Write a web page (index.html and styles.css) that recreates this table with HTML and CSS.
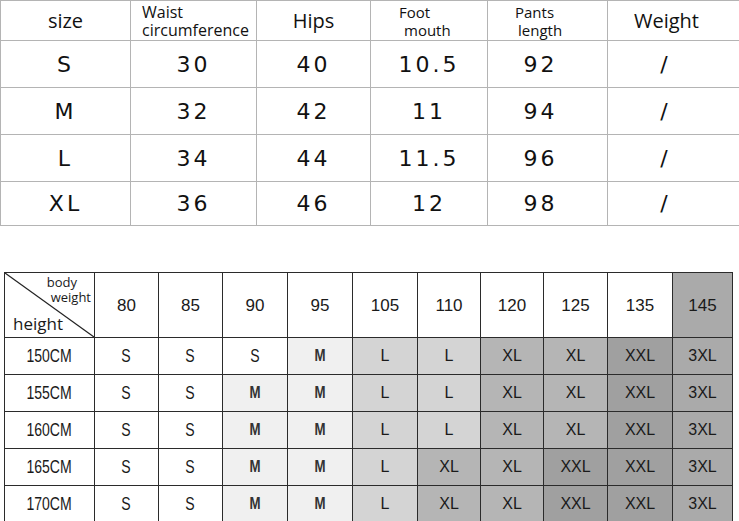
FILE: index.html
```
<!DOCTYPE html>
<html>
<head>
<meta charset="utf-8">
<link rel="stylesheet" href="styles.css">
</head>
<body>
<table class="size-table">
  <colgroup>
    <col style="width:130px"><col style="width:126px"><col style="width:114px"><col style="width:117px"><col style="width:120px"><col style="width:132px">
  </colgroup>
  <tr class="head">
    <th class="big">size</th>
    <th class="two waist"><span>Waist</span><span>circumference</span></th>
    <th class="big">Hips</th>
    <th class="two foot"><span>Foot</span><span class="ind">mouth</span></th>
    <th class="two pants"><span>Pants</span><span class="ind">length</span></th>
    <th class="big wt">Weight</th>
  </tr>
  <tr><td>S</td><td>30</td><td>40</td><td>10.5</td><td class="pl">92</td><td class="sl">/</td></tr>
  <tr><td>M</td><td>32</td><td>42</td><td>11</td><td class="pl">94</td><td class="sl">/</td></tr>
  <tr><td>L</td><td>34</td><td>44</td><td>11.5</td><td class="pl">96</td><td class="sl">/</td></tr>
  <tr class="last"><td>XL</td><td>36</td><td>46</td><td>12</td><td class="pl">98</td><td class="sl">/</td></tr>
</table>

<table class="chart">
  <colgroup>
    <col style="width:90px"><col style="width:64px"><col style="width:64px"><col style="width:65px"><col style="width:65px"><col style="width:65px"><col style="width:63px"><col style="width:63px"><col style="width:64px"><col style="width:65px"><col style="width:60px">
  </colgroup>
  <tr class="chead">
    <th class="corner">
      <svg class="diag" width="90" height="63" viewBox="0 0 90 63" preserveAspectRatio="none"><line x1="0" y1="0" x2="90" y2="63" stroke="#222" stroke-width="1.2"/></svg>
      <span class="body-lbl">body</span>
      <span class="wt-lbl">weight</span>
      <span class="ht">height</span>
    </th>
    <th>80</th><th>85</th><th>90</th><th>95</th><th>105</th><th>110</th><th>120</th><th>125</th><th>135</th><th class="c3xl">145</th>
  </tr>
  <tr><th class="rl"><span class="nar">150CM</span></th><td><span class="nar">S</span></td><td><span class="nar">S</span></td><td><span class="nar">S</span></td><td class="cm"><span class="nar b">M</span></td><td class="cl">L</td><td class="cl">L</td><td class="cxl">XL</td><td class="cxl">XL</td><td class="cxxl">XXL</td><td class="c3xl">3XL</td></tr>
  <tr><th class="rl"><span class="nar">155CM</span></th><td><span class="nar">S</span></td><td><span class="nar">S</span></td><td class="cm"><span class="nar b">M</span></td><td class="cm"><span class="nar b">M</span></td><td class="cl">L</td><td class="cl">L</td><td class="cxl">XL</td><td class="cxl">XL</td><td class="cxxl">XXL</td><td class="c3xl">3XL</td></tr>
  <tr><th class="rl"><span class="nar">160CM</span></th><td><span class="nar">S</span></td><td><span class="nar">S</span></td><td class="cm"><span class="nar b">M</span></td><td class="cm"><span class="nar b">M</span></td><td class="cl">L</td><td class="cl">L</td><td class="cxl">XL</td><td class="cxl">XL</td><td class="cxxl">XXL</td><td class="c3xl">3XL</td></tr>
  <tr><th class="rl"><span class="nar">165CM</span></th><td><span class="nar">S</span></td><td><span class="nar">S</span></td><td class="cm"><span class="nar b">M</span></td><td class="cm"><span class="nar b">M</span></td><td class="cl">L</td><td class="cxl">XL</td><td class="cxl">XL</td><td class="cxxl">XXL</td><td class="cxxl">XXL</td><td class="c3xl">3XL</td></tr>
  <tr><th class="rl"><span class="nar">170CM</span></th><td><span class="nar">S</span></td><td><span class="nar">S</span></td><td class="cm"><span class="nar b">M</span></td><td class="cm"><span class="nar b">M</span></td><td class="cl">L</td><td class="cxl">XL</td><td class="cxl">XL</td><td class="cxxl">XXL</td><td class="cxxl">XXL</td><td class="c3xl">3XL</td></tr>
</table>
</body>
</html>
```

FILE: styles.css
```
html, body {
  margin: 0;
  padding: 0;
  background: #fff;
}
body {
  width: 739px;
  height: 521px;
  overflow: hidden;
}

.size-table {
  border-collapse: collapse;
  table-layout: fixed;
  width: 739px;
  font-family: "Open Sans", "Noto Sans", sans-serif;
  color: #111;
}
.size-table th, .size-table td {
  border: 1px solid #b4b4b4;
  padding: 0;
  text-align: center;
  vertical-align: middle;
}
.size-table .head th {
  height: 39px;
  font-weight: normal;
}
.size-table .big {
  font-size: 20px;
}
.size-table .wt {
  padding-right: 14px;
}
.size-table .two {
  text-align: left;
  line-height: 18px;
  font-size: 16px;
}
.size-table .two span {
  display: block;
}
.size-table .waist { padding-left: 11px; }
.size-table .foot { padding-left: 28px; font-size: 15px; }
.size-table .foot .ind { padding-left: 5px; }
.size-table .pants { padding-left: 27px; font-size: 15px; }
.size-table .pants .ind { padding-left: 3px; }
.size-table td {
  height: 46px;
  font-size: 22px;
  letter-spacing: 3px;
  font-family: "DejaVu Sans", sans-serif;
  font-weight: normal;
}
.size-table .last td {
  height: 43px;
}
.size-table .pl {
  padding-right: 14px;
}
.size-table .sl {
  padding-right: 16px;
}

.chart {
  margin: 46px 0 0 4px;
  border-collapse: collapse;
  table-layout: fixed;
  width: 728px;
  font-family: "Liberation Sans", Arial, sans-serif;
  color: #1a1a1a;
}
.chart th, .chart td {
  border: 1px solid #2b2b2b;
  padding: 0;
  text-align: center;
  vertical-align: middle;
  font-weight: normal;
}
.chart .chead th {
  height: 62px;
  font-size: 17px;
  padding-top: 2px;
}
.chart td, .chart .rl {
  height: 36px;
  font-size: 16px;
}
.nar {
  display: inline-block;
  font-size: 18px;
  transform: scaleX(0.78);
}
.nar.b {
  font-weight: bold;
  color: #333;
  font-size: 17px;
}
.corner {
  position: relative;
  text-align: left;
}
.diag {
  position: absolute;
  left: 0;
  top: 0;
  width: 100%;
  height: 100%;
}
.corner .body-lbl, .corner .wt-lbl, .corner .ht {
  position: absolute;
  font-family: "Open Sans", "Noto Sans", sans-serif;
  line-height: 1;
}
.corner .body-lbl {
  right: 17px;
  top: 3px;
  font-size: 13px;
}
.corner .wt-lbl {
  right: 3px;
  top: 18px;
  font-size: 13px;
}
.corner .ht {
  left: 8px;
  bottom: 5px;
  font-size: 17px;
}
.cm { background: #f0f0f0; }
.cl { background: #d4d4d4; }
.cxl { background: #b5b5b5; }
.cxxl { background: #a0a0a0; }
.c3xl { background: #aaaaaa; }
```
